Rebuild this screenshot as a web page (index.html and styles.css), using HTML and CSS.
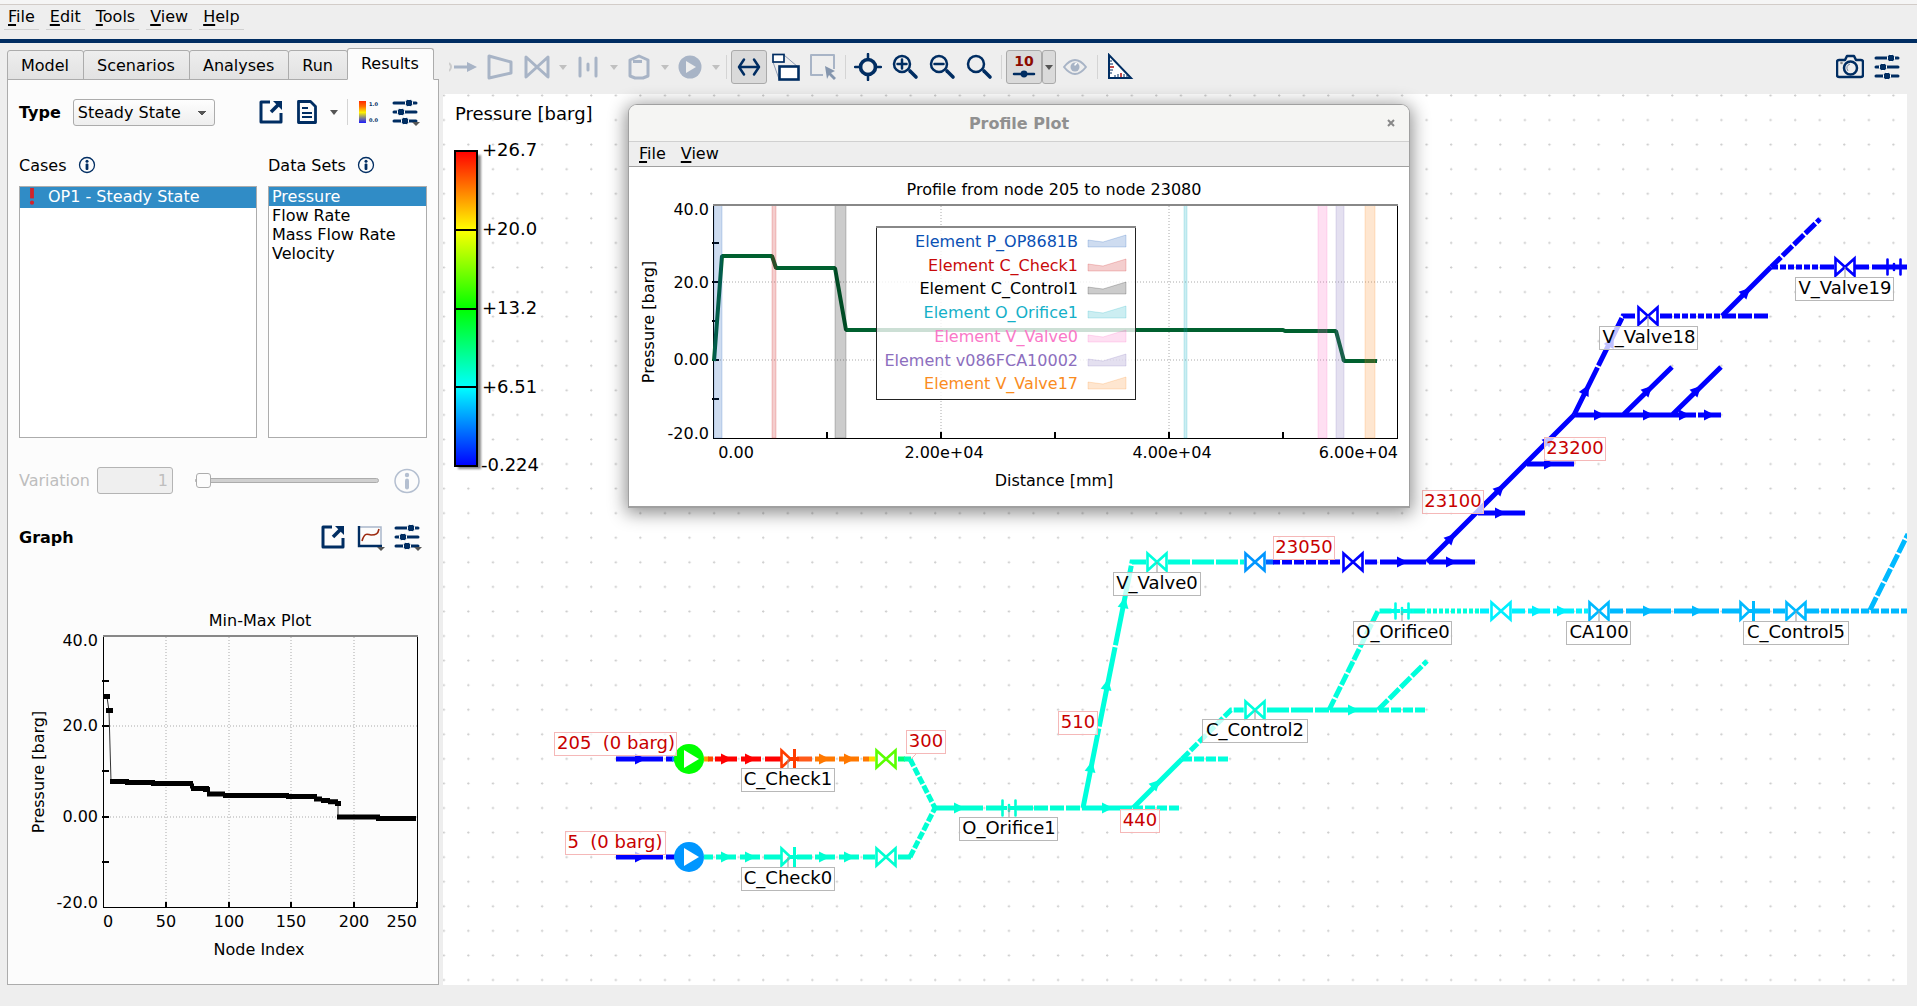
FILE: index.html
```html
<!DOCTYPE html>
<html lang="en">
<head>
<meta charset="utf-8">
<title>Pipe network results</title>
<link rel="stylesheet" href="styles.css">
</head>
<body>
<svg class="defs" aria-hidden="true">
  <defs>
    <symbol id="i-export" viewBox="0 0 28 28"><path d="M13 4H4v20h20v-9" fill="none" stroke="#002d62" stroke-width="3" stroke-linejoin="round"/><path d="M14 14 22 6" stroke="#002d62" stroke-width="3.500"/><path d="M16 3h9v9z" fill="#002d62"/></symbol>
    <symbol id="i-sliders" viewBox="0 0 28 28"><path d="M3 5h22M3 14h22M3 23h22" stroke="#002d62" stroke-width="3" stroke-linecap="round"/><g fill="#002d62" stroke="#fcfcfc"><rect x="14.500" y="1.500" width="7" height="7" rx="2"/><rect x="6.500" y="10.500" width="7" height="7" rx="2"/><rect x="10.500" y="19.500" width="7" height="7" rx="2"/></g></symbol>
    <symbol id="i-info" viewBox="0 0 18 18"><circle cx="9" cy="9" r="7.500" fill="none" stroke="currentColor" stroke-width="1.300"/><circle cx="9" cy="5.200" r="1.500" fill="currentColor"/><rect x="7.600" y="7.600" width="2.800" height="6.400" rx="1" fill="currentColor"/></symbol>
  </defs>
</svg>

<header class="menubar">
  <nav class="menus" aria-label="Main menu">
    <button class="menu"><u>F</u>ile</button>
    <button class="menu"><u>E</u>dit</button>
    <button class="menu"><u>T</u>ools</button>
    <button class="menu"><u>V</u>iew</button>
    <button class="menu"><u>H</u>elp</button>
  </nav>
</header>

<div class="workspace">
  <aside class="sidebar">
    <div class="tabs" role="tablist">
      <button class="tab" role="tab">Model</button>
      <button class="tab" role="tab">Scenarios</button>
      <button class="tab" role="tab">Analyses</button>
      <button class="tab" role="tab">Run</button>
      <button class="tab active" role="tab" aria-selected="true">Results</button>
    </div>
    <section class="pane">
      <div class="row type-row">
        <label class="strong" for="type">Type</label>
        <select id="type" class="combo"><option>Steady State</option></select>
        <div class="tools">
          <button class="tool" aria-label="Open in window"><svg><use href="#i-export"/></svg></button>
          <button class="tool" aria-label="Report"><svg viewBox="0 0 28 28"><path d="M5.500 3.500h12l5 5v16h-17z" fill="none" stroke="#002d62" stroke-width="2.800" stroke-linejoin="round"/><path d="M9 10h6M9 15h10M9 19h10" stroke="#002d62" stroke-width="1.800"/></svg></button>
          <button class="caret" aria-label="Report options"></button>
          <span class="rule"></span>
          <button class="tool" aria-label="Colour scale"><svg viewBox="0 0 28 28"><defs><linearGradient id="mini" x2="0" y2="1"><stop offset="0" stop-color="#ff2a00"/><stop offset=".25" stop-color="#ff7000"/><stop offset=".52" stop-color="#fff200"/><stop offset=".75" stop-color="#8a8a80"/><stop offset="1" stop-color="#1a1aff"/></linearGradient></defs><rect x="4" y="3" width="7" height="22" fill="url(#mini)"/><text x="14" y="8" class="tiny">1.0</text><text x="14" y="24" class="tiny">0.0</text></svg></button>
          <button class="tool" aria-label="Result options"><svg><use href="#i-sliders"/></svg><i class="corner"></i></button>
        </div>
      </div>

      <div class="lists">
        <div class="list-head" id="cases">Cases <svg class="info"><use href="#i-info"/></svg></div>
        <div class="list-head" id="sets">Data Sets <svg class="info"><use href="#i-info"/></svg></div>
        <ul class="list" role="listbox" aria-labelledby="cases">
          <li class="case selected" role="option" aria-selected="true"><svg class="alert" viewBox="0 0 6 20"><path d="M3 1v11" stroke="#d2232a" stroke-width="4"/><circle cx="3" cy="16.500" r="2.200" fill="#d2232a"/></svg>OP1 - Steady State</li>
        </ul>
        <ul class="list" role="listbox" aria-labelledby="sets">
          <li class="selected" role="option" aria-selected="true">Pressure</li>
          <li role="option">Flow Rate</li>
          <li role="option">Mass Flow Rate</li>
          <li role="option">Velocity</li>
        </ul>
      </div>

      <div class="row variation">
        <label for="variation">Variation</label>
        <input id="variation" class="number" type="text" value="1" disabled>
        <input class="slider" type="range" min="1" max="10" value="1" aria-label="Variation" disabled>
        <svg class="info big" viewBox="0 0 26 24"><ellipse cx="13" cy="12" rx="12" ry="11.500" fill="none" stroke="currentColor" stroke-width="1.500"/><circle cx="13" cy="6" r="2.200" fill="currentColor"/><rect x="11" y="9.500" width="4" height="11" rx="2" fill="currentColor"/></svg>
      </div>

      <div class="row graph-row">
        <h2 class="strong">Graph</h2>
        <div class="tools">
          <button class="tool" aria-label="Open graph"><svg><use href="#i-export"/></svg></button>
          <button class="tool" aria-label="Graph kind"><svg viewBox="0 0 28 28"><path d="M3 4h22v18" fill="none" stroke="#a9b6ca" stroke-width="1.500"/><path d="M3 3v20h23" fill="none" stroke="#002d62" stroke-width="2.400"/><path d="M6 18C9 8 12 12 15 12c5 0 7-1 8-6" fill="none" stroke="#9c2a10" stroke-width="1.600"/></svg><i class="corner"></i></button>
          <button class="tool" aria-label="Graph options"><svg><use href="#i-sliders"/></svg><i class="corner"></i></button>
        </div>
      </div>

      <svg class="minmax" viewBox="0 0 408 384" role="img" aria-label="Min-Max Plot">
        <g transform="translate(-19 -592)">
          <g class="gridline"><path d="M166 637V907M229 637V907M291 637V907M354 637V907M104 726H417M104 817H417"/></g>
          <path d="M103.500 636V907H417V636" class="frame"/><path d="M103 636H418" class="frame-top"/>
          <path d="M102 681h7M102 726h7M102 771h7M102 817h7M102 862h7M166 902v5M229 902v5M291 902v5M354 902v5M417 902v5" class="ticks"/>
          <path d="M107 697 109 711 111 781M338 803V816" fill="none" stroke="#333"/>
          <path d="M103 696.500h7M106 710.500h7M110 781.500h19M125 782.500h30M151 783.500h42M190 786h4M191 788.500h18M203 789.500h7M207 794h18M223 795.500h66M286 796.500h31M314 799h8M321 800.500h9M328 801.800h10M335 803.500h6M337 817h43M376 818.500h40" fill="none" stroke="#000" stroke-width="5"/>
          <g class="plot-text">
            <text x="260" y="626" class="mid">Min-Max Plot</text>
            <g class="end"><text x="98" y="646">40.0</text><text x="98" y="731">20.0</text><text x="98" y="822">0.00</text><text x="98" y="908">-20.0</text><text x="417" y="927">250</text></g>
            <g class="mid"><text x="108" y="927">0</text><text x="166" y="927">50</text><text x="229" y="927">100</text><text x="291" y="927">150</text><text x="354" y="927">200</text><text x="259" y="955">Node Index</text><text transform="translate(44 772) rotate(-90)">Pressure [barg]</text></g>
          </g>
        </g>
      </svg>
    </section>
  </aside>

  <main class="main">
    <div class="toolbar" role="toolbar">
      <button class="tbtn faded" aria-label="Pipe"><svg viewBox="0 0 28 28"><path d="M0 10q4 4 0 8" fill="none" stroke="#ccc" stroke-width="2"/><path d="M5 14h15" stroke="#a8b4c6" stroke-width="3"/><path d="m18 9 10 5-10 5z" fill="#a8b4c6"/></svg></button>
      <button class="tbtn faded" aria-label="Reducer"><svg viewBox="0 0 28 28"><path d="M3 3 25 9v11L3 25z" class="line"/></svg></button>
      <button class="tbtn faded" aria-label="Valve"><svg viewBox="0 0 28 28"><path d="M3 4 25 24V4L3 24z" class="line"/></svg></button>
      <button class="caret faded" aria-label="More valves"></button>
      <button class="tbtn faded" aria-label="Orifice"><svg viewBox="0 0 28 28"><path d="M6 5v18M22 5v18M14 11v6" class="line" stroke-linecap="round"/></svg></button>
      <button class="caret faded" aria-label="More fittings"></button>
      <button class="tbtn faded" aria-label="Tank"><svg viewBox="0 0 28 28"><path d="M5 7 14 3l9 4v16l-5 2h-8l-5-2zM8 8.500h9" class="line" stroke-width="2.600"/></svg></button>
      <button class="caret faded" aria-label="More tanks"></button>
      <button class="tbtn faded" aria-label="Pump"><svg viewBox="0 0 28 28"><circle cx="14" cy="14" r="11.500" fill="#a8b4c6"/><path d="m10 8 10 6-10 6z" fill="#eee"/></svg></button>
      <button class="caret faded" aria-label="More pumps"></button>
      <span class="rule"></span>
      <button class="tbtn pressed" aria-label="Stretch"><svg viewBox="0 0 28 28"><path d="M5 14h18M9 6.500 4 14l5 7.500M19 6.500 24 14l-5 7.500" class="navy" stroke-width="3"/></svg></button>
      <button class="tbtn" aria-label="Overview"><svg viewBox="0 0 28 28"><path d="M1 9 7 26M12 2l14 12" stroke="#8d9bb3" fill="none"/><rect x="1" y="1.500" width="11" height="7.500" fill="#fff" stroke="#002d62" stroke-width="1.700"/><rect x="7.500" y="13.500" width="19" height="13" fill="#fff" stroke="#002d62" stroke-width="2.600"/></svg></button>
      <button class="tbtn faded" aria-label="Select"><svg viewBox="0 0 28 28"><path d="M14 22H2V2h23v14" class="line thin"/><path d="m16 13 10 5-4 2 5 5-2 2-5-5-2 4z" fill="#8596ae"/></svg></button>
      <span class="rule"></span>
      <button class="tbtn" aria-label="Centre"><svg viewBox="0 0 28 28"><circle cx="14" cy="14" r="7.500" class="navy heavy"/><path d="M14 1v6M14 21v6M1 14h6M21 14h6" class="navy"/></svg></button>
      <button class="tbtn" aria-label="Zoom in"><svg viewBox="0 0 28 28"><circle cx="11" cy="11" r="8" class="navy"/><path d="M6.500 11h9M11 6.500v9" class="navy"/><path d="m19 18 6 6" class="navy heavy"/></svg></button>
      <button class="tbtn" aria-label="Zoom out"><svg viewBox="0 0 28 28"><circle cx="11" cy="11" r="8" class="navy"/><path d="M6.500 11h9" class="navy"/><path d="m19 18 6 6" class="navy heavy"/></svg></button>
      <button class="tbtn" aria-label="Zoom window"><svg viewBox="0 0 28 28"><circle cx="11" cy="11" r="8" class="navy"/><path d="m19 18 6 6" class="navy heavy"/></svg></button>
      <span class="rule"></span>
      <div class="split">
        <button class="tbtn pressed" aria-label="Value labels"><svg viewBox="0 0 28 28"><text x="14" y="13" class="ten">10</text><path d="M4 21h20" class="navy"/><circle cx="14" cy="21" r="3.400" fill="#002d62"/></svg></button>
        <button class="caret pressed" aria-label="Label options"></button>
      </div>
      <button class="tbtn faded" aria-label="Visibility"><svg viewBox="0 0 28 28"><path d="M3 14q11-14 22 0-11 14-22 0z" class="line thin"/><circle cx="14" cy="14" r="4.500" fill="#a8b4c6"/><path d="M14 12.500a2 2 0 0 1 2-2" stroke="#fff" fill="none" stroke-width="1.500"/></svg></button>
      <span class="rule"></span>
      <button class="tbtn" aria-label="Measure"><svg viewBox="0 0 28 28"><path d="M3 2v23h22z" fill="#fff" stroke="#002d62" stroke-width="2"/><path d="M4 8h2M4 11h3M4 17h3M4 20h2M9 24v-2M12 24v-3M18 24v-3M21 24v-2" stroke="#002d62"/><path d="M4 14h4M15 24v-4" stroke="#b01010" stroke-width="1.500"/></svg></button>
      <div class="right-tools">
        <button class="tbtn" aria-label="Snapshot"><svg viewBox="0 0 28 28"><path d="M3 7h6l2-4h7l2 4h5q2 0 2 2v13q0 2-2 2H3q-2 0-2-2V9q0-2 2-2z" class="navy"/><circle cx="14.500" cy="15" r="6.500" class="navy"/><path d="M12 18q-3-5 2-7" fill="none" stroke="#7687a3"/><circle cx="5.500" cy="10" r="1.300" fill="#8a8a8a"/></svg></button>
        <button class="tbtn" aria-label="Settings"><svg><use href="#i-sliders"/></svg></button>
      </div>
    </div>

    <div class="canvas">
      <svg class="network" role="img" aria-label="Pipe network coloured by pressure">
        <defs>
          <pattern id="dots" width="24.570" height="24.570" patternUnits="userSpaceOnUse" x="-.4" y="0"><path d="M0 1.500h2.400M1.200.300v2.400" stroke="#ccc"/></pattern>
          <linearGradient id="scale" x2="0" y2="1"><stop offset="0" stop-color="red"/><stop offset=".25" stop-color="#ff0"/><stop offset=".5" stop-color="#0f0"/><stop offset=".75" stop-color="#0ff"/><stop offset="1" stop-color="#00f"/></linearGradient>
          <path id="arrow" d="M-5-5.500 6 0-5 5.500z" fill="currentColor"/>
          <path id="v" d="M-9.500-8.500 9.500 8.500V-8.500L-9.500 8.500Z" fill="#fff" stroke="currentColor" stroke-width="2.600"/>
          <g id="orifice" stroke="currentColor" fill="none"><path d="M-6.500-7.500v15M6.500-7.500v15M0-3v6" stroke-width="2.600" stroke-linecap="round"/><path d="M-12 0h24" stroke-width="4" stroke-dasharray="10 1"/></g>
          <g id="check" stroke="currentColor" fill="#fff"><path d="M2 0h9" stroke-width="4"/><path d="M-6.500-8.500 2.500 0l-9 8.500z" stroke-width="2.600"/><path d="M6.500-10v20" stroke-width="3"/></g>
        </defs>
        <rect width="100%" height="100%" fill="url(#dots)"/>
        <g transform="translate(-443 -94)">
          <!-- inlets and the two pump lines -->
          <g class="pipe c-blue"><path d="M616 759h47M616 857h47"/><path d="M666 857h12" /><path d="M666 759h7"/><path d="M672 759h6" color="#0080ff"/><use href="#arrow" x="640" y="759"/><use href="#arrow" x="640" y="857"/></g>
          <g class="pipe c-red"><path d="M704 759h5" color="#ffa000"/><path d="M708 759h5" color="#ff4800"/><path d="M715 759h22M741 759h20M765 759h16"/><use href="#arrow" x="726" y="759"/><use href="#arrow" x="750" y="759"/></g>
          <g class="pipe c-orange"><path d="M797 759h15" color="#ff5a1a"/><path d="M815 759h20M839 759h20"/><path d="M863 759h6"/><path d="M869 759h6" color="#ffd800"/><use href="#arrow" x="824" y="759"/><use href="#arrow" x="849" y="759"/></g>
          <g class="pipe"><path d="M898 759h7" color="#00ff78"/><path d="M904 759h7" color="#00ffb4"/></g>
          <g class="pipe c-teal">
            <path d="M704 857h9M716 857h20M740 857h20M764 857h17M797 857h15M815 857h20M839 857h20M863 857h12M898 857h13"/>
            <path d="M910 759 935 808M910 857 935 808" class="d9"/>
            <path d="M935 808h48M986 808h16M1017 808h16"/><path d="M1034 808h49" class="d16"/>
            <use href="#arrow" x="726" y="857"/><use href="#arrow" x="750" y="857"/><use href="#arrow" x="824" y="857"/><use href="#arrow" x="849" y="857"/><use href="#arrow" x="959" y="808"/>
          </g>
          <!-- branch 510 up to V_Valve0 and branch 440 -->
          <g class="pipe c-aqua">
            <path d="M1083 808h49"/><path d="M1133 808h47M1182 759h47" class="d12"/>
            <path d="M1083 808 1132 562h14" class="d82"/><path d="M1168 562h76" class="d24"/>
            <path d="M1133 808 1182 759"/><path d="M1182 759 1231 710h13" class="d12"/>
            <path d="M1267 710h62" class="d24"/><path d="M1330 710h47"/><path d="M1379 710h47" class="d12"/>
            <path d="M1378 710 1427 661" class="d16"/><path d="M1329 710 1378 611h17" class="d14"/><path d="M1409 611h16"/><path d="M1427 611h52" class="d5"/>
            <use href="#arrow" x="1107" y="808"/><use href="#arrow" x="1353" y="710"/>
            <use href="#arrow" transform="translate(1156 784) rotate(-45)"/>
            <use href="#arrow" transform="translate(1091 767) rotate(-79)"/><use href="#arrow" transform="translate(1107 685) rotate(-79)"/><use href="#arrow" transform="translate(1124 603) rotate(-79)"/>
          </g>
          <!-- header 23050 and its laterals -->
          <g class="pipe c-blue">
            <path d="M1266 562h8" color="#0064ff"/><path d="M1273 562h7"/><path d="M1282 562h60" class="d12"/><path d="M1365 562h12M1380 562h46M1429 562h46M1478 513h47M1527 464h47"/>
            <path d="M1427 562 1574 415M1574 415h147M1623 415 1672 367M1672 415 1721 367" /><path d="M1574 415 1623 316h12" class="d55"/>
            <path d="M1660 316h12"/><path d="M1674 316h46" class="d8"/><path d="M1722 316h48" class="d16"/>
            <path d="M1722 316 1771 267"/><path d="M1771 267 1820 219" class="d16"/><path d="M1772 267h46" class="d8"/><path d="M1820 267h14M1855 267h14M1872 267h35"/>
            <use href="#arrow" x="1402" y="562"/><use href="#arrow" x="1451" y="562"/><use href="#arrow" x="1500" y="513"/><use href="#arrow" x="1549" y="464"/>
            <use href="#arrow" x="1599" y="415"/><use href="#arrow" x="1648" y="415"/><use href="#arrow" x="1684" y="415"/><use href="#arrow" x="1709" y="415"/>
            <use href="#arrow" transform="translate(1451 538) rotate(-45)"/><use href="#arrow" transform="translate(1500 489) rotate(-45)"/><use href="#arrow" transform="translate(1549 440) rotate(-45)"/>
            <use href="#arrow" transform="translate(1648 390) rotate(-45)"/><use href="#arrow" transform="translate(1697 390) rotate(-45)"/><use href="#arrow" transform="translate(1746 292) rotate(-45)"/>
            <use href="#arrow" transform="translate(1586 390) rotate(-63)"/><use href="#arrow" transform="translate(1611 342) rotate(-63)"/>
          </g>
          <path d="M1697 412v6" stroke="#fff" stroke-width="2"/>
          <!-- CA100 line -->
          <g class="pipe c-cyan"><path d="M1480 611h9M1512 611h13M1528 611h22M1553 611h21"/><path d="M1576 611h12" class="d8"/><use href="#arrow" x="1537" y="611"/><use href="#arrow" x="1562" y="611"/></g>
          <g class="pipe c-sky"><path d="M1610 611h13M1626 611h45M1674 611h45M1722 611h18M1755 611h15M1773 611h12M1806 611h13"/><path d="M1821 611h86" class="d9"/><path d="M1870 610 1908 534" class="d16"/><use href="#arrow" x="1648" y="611"/><use href="#arrow" x="1697" y="611"/></g>
          <!-- components -->
          <circle cx="689" cy="759" r="15" fill="#0f0"/><path d="M684 750v18l15-9z" fill="#fff"/>
          <circle cx="689" cy="857" r="15" fill="#0096ff"/><path d="M684 848v18l15-9z" fill="#fff"/>
          <use href="#check" x="788" y="759" color="#ff3c00"/><use href="#v" x="886" y="759" color="#5aff00"/>
          <g class="c-teal"><use href="#check" x="788" y="857"/><use href="#v" x="886" y="857"/><use href="#orifice" x="1009" y="808"/></g>
          <g class="c-aqua"><use href="#v" x="1157" y="562"/><use href="#v" x="1255" y="710"/><use href="#orifice" x="1402" y="611" color="#00ffe8"/></g>
          <use href="#v" x="1255" y="562" color="#0096ff"/><use href="#v" x="1501" y="611" color="#00f0ff"/>
          <g class="c-sky"><use href="#v" x="1599" y="611"/><use href="#check" x="1747" y="611"/><use href="#v" x="1796" y="611"/></g>
          <g class="c-blue"><use href="#v" x="1353" y="562"/><use href="#v" x="1648" y="316"/><use href="#v" x="1845" y="267"/><use href="#orifice" x="1894" y="267"/></g>
          <path d="M788 759v9M788 857v10M1009 808v9M1157 562v10M1402 611v10M1255 710v9M1648 316v10M1845 267v10M1599 611v10M1796 611v10" stroke="#999" fill="none"/>
          <path d="m911 759 6-6M1575 464v-4" stroke="#f5b8b8" fill="none"/>
          <!-- component tags -->
          <g class="tag">
            <rect x="741.500" y="768.500" width="93" height="23"/><text x="788" y="785">C_Check1</text>
            <rect x="741.500" y="867.500" width="93" height="23"/><text x="788" y="884">C_Check0</text>
            <rect x="959.500" y="817.500" width="98" height="23"/><text x="1009" y="834">O_Orifice1</text>
            <rect x="1113.500" y="572.500" width="87" height="23"/><text x="1157" y="589">V_Valve0</text>
            <rect x="1353.500" y="621.500" width="98" height="23"/><text x="1403" y="638">O_Orifice0</text>
            <rect x="1202.500" y="719.500" width="105" height="23"/><text x="1255" y="736">C_Control2</text>
            <rect x="1599.500" y="326.500" width="98" height="23"/><text x="1649" y="343">V_Valve18</text>
            <rect x="1795.500" y="277.500" width="98" height="23"/><text x="1845" y="294">V_Valve19</text>
            <rect x="1566.500" y="621.500" width="64" height="23"/><text x="1599" y="638">CA100</text>
            <rect x="1743.500" y="621.500" width="105" height="23"/><text x="1796" y="638">C_Control5</text>
          </g>
          <!-- node tags -->
          <g class="tag node">
            <rect x="554.500" y="732.500" width="122" height="23"/><text x="616" y="749">205&#160; (0 barg)</text>
            <rect x="565.500" y="831.500" width="100" height="23"/><text x="615" y="848">5&#160; (0 barg)</text>
            <rect x="906.500" y="730.500" width="39" height="23"/><text x="926" y="747">300</text>
            <rect x="1058.500" y="711.500" width="39" height="23"/><text x="1078" y="728">510</text>
            <rect x="1120.500" y="809.500" width="39" height="23"/><text x="1140" y="826">440</text>
            <rect x="1273.500" y="536.500" width="61" height="23"/><text x="1304" y="553">23050</text>
            <rect x="1422.500" y="490.500" width="61" height="23"/><text x="1453" y="507">23100</text>
            <rect x="1544.500" y="437.500" width="61" height="23"/><text x="1575" y="454">23200</text>
          </g>
          <!-- colour scale -->
          <rect x="458" y="155" width="23" height="314" fill="#888" class="soft"/>
          <rect x="455" y="151" width="22" height="315" fill="url(#scale)" stroke="#000" stroke-width="2"/>
          <path d="M455 230h22M455 309h22M455 387h22" stroke="#000" stroke-width="2"/>
          <g class="scale-text"><text x="455" y="120">Pressure [barg]</text><text x="482" y="156">+26.7</text><text x="482" y="235">+20.0</text><text x="482" y="314">+13.2</text><text x="482" y="393">+6.51</text><text x="481" y="471">-0.224</text></g>
        </g>
      </svg>

      <section class="window" role="dialog" aria-labelledby="win-title">
        <header class="titlebar"><h1 id="win-title">Profile Plot</h1><button class="close" aria-label="Close"><svg viewBox="0 0 8 8"><path d="m1 1 6 6M7 1 1 7" stroke="#888" stroke-width="2"/></svg></button></header>
        <nav class="win-menus" aria-label="Plot menu"><button class="menu"><u>F</u>ile</button><button class="menu"><u>V</u>iew</button></nav>
        <svg class="profile" viewBox="0 0 780 339" role="img" aria-label="Profile from node 205 to node 23080">
          <g transform="translate(-629 -167)">
            <g class="gridline"><path d="M941 206V438M1169 206V438M714 282H1397M714 360H1397"/></g>
            <path d="M713.500 205V438.500H1397.500V205" class="frame"/>
            <path d="M712 243h7M712 282h7M712 321h7M712 360h7M712 399h7M827 432v6M941 432v6M1055 432v6M1169 432v6M1283 432v6" class="ticks"/>
            <path d="M714 361 722 256H772L776 268H835L846 330H1283L1285 331H1336L1344 361H1377" fill="none" stroke="#00602f" stroke-width="4" stroke-linejoin="bevel"/>
            <g class="band">
              <rect x="714" y="205" width="8" height="233" fill="#0a50b4" stroke="#0a50b4"/><rect x="772" y="205" width="4" height="233" fill="#c80a0a" stroke="#c80a0a"/><rect x="835" y="205" width="11" height="233" fill="#000" stroke="#000"/><rect x="1184" y="205" width="3" height="233" fill="#00aabe" stroke="#00aabe"/><rect x="1318" y="205" width="9" height="233" fill="#fa5fbe" stroke="#fa5fbe"/><rect x="1336" y="205" width="8" height="233" fill="#7864b4" stroke="#7864b4"/><rect x="1365" y="205" width="10" height="233" fill="#fa8214" stroke="#fa8214"/>
            </g>
            <path d="M713 205H1398" class="frame-top"/>
            <rect x="876.500" y="226.500" width="259" height="173" fill="#fff" fill-opacity=".8" stroke="#222"/><path d="M876 226.500h260" class="frame-top"/>
            <g class="plot-text end">
              <text x="1078" y="247" fill="#0a50b4">Element P_OP8681B</text><text x="1078" y="271" fill="#c80a0a">Element C_Check1</text><text x="1078" y="294">Element C_Control1</text><text x="1078" y="318" fill="#14b0c8">Element O_Orifice1</text><text x="1078" y="342" fill="#fa78c8">Element V_Valve0</text><text x="1078" y="366" fill="#8c6ebe">Element v086FCA10002</text><text x="1078" y="389" fill="#fa8c1e">Element V_Valve17</text>
              <text x="709" y="215">40.0</text><text x="709" y="288">20.0</text><text x="709" y="365">0.00</text><text x="709" y="439">-20.0</text><text x="1398" y="458">6.00e+04</text>
            </g>
            <g class="swatch">
              <path d="m1088 240 15 2 23-7v12h-38z" fill="#0a50b4" stroke="#0a50b4"/><path d="m1088 264 15 2 23-7v12h-38z" fill="#c80a0a" stroke="#c80a0a"/><path d="m1088 287 15 2 23-7v12h-38z" stroke="#000"/><path d="m1088 311 15 2 23-7v12h-38z" fill="#00aabe" stroke="#00aabe"/><path d="m1088 335 15 2 23-7v12h-38z" fill="#fa5fbe" stroke="#fa5fbe"/><path d="m1088 359 15 2 23-7v12h-38z" fill="#7864b4" stroke="#7864b4"/><path d="m1088 382 15 2 23-7v12h-38z" fill="#fa8214" stroke="#fa8214"/>
            </g>
            <g class="plot-text mid"><text x="1054" y="195">Profile from node 205 to node 23080</text><text x="736" y="458">0.00</text><text x="944" y="458">2.00e+04</text><text x="1172" y="458">4.00e+04</text><text x="1054" y="486">Distance [mm]</text><text transform="translate(654 322) rotate(-90)">Pressure [barg]</text></g>
          </g>
        </svg>
      </section>
    </div>
  </main>
</div>
</body>
</html>
```

FILE: styles.css
```css
* { box-sizing: border-box; }
body {
  margin: 0;
  min-height: 100vh;
  display: flex;
  flex-direction: column;
  background: #eee;
  color: #000;
  font: 16px/19px "DejaVu Sans", sans-serif;
}
button { font: inherit; color: inherit; background: none; border: 0; padding: 0; margin: 0; }
h1, h2 { margin: 0; font-size: 16px; font-weight: bold; }
ul { margin: 0; padding: 0; list-style: none; }
.defs { position: absolute; width: 0; height: 0; }

/* menu bar */
.menubar { height: 43px; padding-top: 3px; border-top: 4px solid #f5f5f5; border-bottom: 4px solid #002d62; box-shadow: inset 0 1px #d2ccc8; }
.menus { display: flex; gap: 7px; padding-left: 4px; }
.menus .menu { padding: 0 4px 3px; border-bottom: 1px solid #d0d0d0; }
.menu u { text-decoration-thickness: 2px; text-underline-offset: 2px; }

.workspace { flex: 1; display: flex; min-height: 0; }

/* sidebar */
.sidebar { flex: none; width: 432px; margin-left: 7px; padding: 5px 0 21px; display: flex; flex-direction: column; }
.tabs { display: flex; align-items: flex-end; height: 32px; margin-bottom: -1px; z-index: 1; }
.tab { height: 30px; padding: 0 14px 0 13px; margin-right: -1px; border: 1px solid #acacac; border-radius: 3px 3px 0 0; background: linear-gradient(#eee, #e2e2e2); }
.tab.active { height: 32px; background: #fcfcfc; border-bottom-color: #fcfcfc; padding-bottom: 2px; }
.pane { flex: 1; border: 1px solid #acacac; background: #fcfcfc; padding: 18px 11px 0; }
.row { display: flex; align-items: center; }
.strong { font-weight: bold; }
.type-row { height: 28px; }
.combo {
  appearance: none; width: 142px; height: 27px; margin-left: 12px; padding: 0 4px; font: inherit; color: inherit;
  border: 1px solid #acacac; border-radius: 3px;
  background-image: linear-gradient(to bottom left, #555 50%, transparent 51%), linear-gradient(to bottom right, #555 50%, transparent 51%), linear-gradient(#fefefe, #eee);
  background-size: 4px 5px, 4px 5px, auto;
  background-repeat: no-repeat;
  background-position: 124px 11px, 128px 11px, 0 0;
}
.tools { display: flex; align-items: center; margin-left: auto; gap: 9px; padding-right: 6px; }
.tool { position: relative; width: 28px; height: 28px; }
.tool svg { display: block; width: 28px; height: 28px; }
.corner { position: absolute; right: -1px; bottom: 0; border: 4px solid transparent; border-top-color: #555; border-bottom: 0; }
.caret { width: 13px; height: 34px; display: grid; place-items: center; }
.caret::before { content: ""; border: 4px solid transparent; border-top: 5px solid #555; border-bottom: 0; }
.rule { width: 7px; height: 26px; background: linear-gradient(#d4d4d4, #d4d4d4) center / 1px 100% no-repeat; }
.type-row .tools { gap: 8px; padding-right: 8px; }
.type-row .caret { margin-left: -2px; }
.type-row .rule { margin: 0 -4px; }
.tiny { font: bold 5px "DejaVu Sans", sans-serif; fill: #002d62; }

.lists { display: grid; grid-template-columns: 238px 159px; column-gap: 11px; margin-top: 28px; }
.list-head { display: flex; align-items: center; gap: 11px; height: 22px; margin-bottom: 10px; }
.info { width: 18px; height: 18px; color: #002d62; flex: none; }
.list { height: 252px; border: 1px solid #acacac; background: #fff; }
.list li { padding-left: 3px; }
.list .case { display: flex; align-items: center; height: 21px; gap: 13px; padding: 0 0 2px 9px; }
.list .selected { background: #308cc6; color: #fff; }
.alert { width: 6px; height: 19px; }

.variation { margin-top: 29px; height: 27px; color: #bebebe; }
.number { width: 76px; height: 27px; margin-left: 7px; padding: 0 4px; font: inherit; color: #bebebe; text-align: right; border: 1px solid #b4b4b4; border-radius: 3px; background: #efefef; }
.slider { appearance: none; width: 184px; height: 16px; margin: 0 0 0 22px; background: none; }
.slider::-webkit-slider-runnable-track { height: 5px; border: 1px solid #acacac; border-radius: 3px; background: #d0d0d0; }
.slider::-webkit-slider-thumb { appearance: none; width: 15px; height: 15px; margin-top: -6px; border: 1px solid #acacac; border-radius: 3px; background: #fcfcfc; }
.info.big { width: 26px; height: 26px; margin-left: auto; margin-right: 7px; color: #b4bfd0; }

.graph-row { margin-top: 29px; height: 28px; }
.minmax { display: block; width: 100%; max-width: 408px; margin-top: 41px; }

.gridline path { fill: none; stroke: #aaa; stroke-dasharray: 1 2; }
.frame { fill: none; stroke: #000; stroke-width: 1; shape-rendering: crispEdges; }
.frame-top { stroke: #888; stroke-width: 2; fill: none; shape-rendering: crispEdges; }
.ticks { stroke: #000; stroke-width: 2; fill: none; shape-rendering: crispEdges; }
.plot-text { font-size: 16px; }
.mid { text-anchor: middle; }
.end { text-anchor: end; }

/* toolbar */
.main { flex: 1; min-width: 0; display: flex; flex-direction: column; padding: 0 10px 21px 4px; }
.toolbar { flex: none; height: 51px; display: flex; align-items: flex-start; gap: 1px; padding: 7px 0 0 2px; }
.tbtn { width: 36px; height: 34px; display: grid; place-items: center; border: 1px solid transparent; flex: none; }
.tbtn svg { width: 28px; height: 28px; display: block; }
.toolbar .rule { height: 24px; margin-top: 5px; }
.tbtn.pressed, .caret.pressed { border: 1px solid #aaa; border-radius: 3px; background: #dadada; }
.caret.pressed { width: 14px; }
.caret.faded::before { border-top-color: #c0c0c0; }
.split { display: flex; }
.line { fill: none; stroke: #a8b4c6; stroke-width: 3; stroke-linejoin: round; }
.line.thin { stroke-width: 2; }
.navy { fill: none; stroke: #002d62; stroke-width: 2.500; stroke-linecap: round; stroke-linejoin: round; }
.navy.heavy { stroke-width: 3.600; }
.ten { font: bold 14px "DejaVu Sans", sans-serif; fill: #8c0a00; text-anchor: middle; }
.right-tools { display: flex; gap: 1px; margin-left: auto; padding-right: 2px; }

/* diagram */
.canvas { position: relative; flex: 1; background: #fff; min-height: 600px; }
.network { position: absolute; inset: 0; width: 100%; height: 100%; overflow: hidden; }
.pipe { fill: none; stroke-width: 5; }
.pipe path { stroke: currentColor; }
.pipe use { stroke: none; }
.c-blue { color: #00f; }
.c-red { color: #f00; }
.c-orange { color: #ff7800; }
.c-teal { color: #00ffd2; }
.c-aqua { color: #00ffdc; }
.c-cyan { color: #00f0ff; }
.c-sky { color: #00b9ff; }
.d5 { stroke-dasharray: 4 2; }
.d8 { stroke-dasharray: 6 2; }
.d9 { stroke-dasharray: 8 2; }
.d12 { stroke-dasharray: 10 2; }
.d14 { stroke-dasharray: 12 2; }
.d16 { stroke-dasharray: 14 2; }
.d24 { stroke-dasharray: 22 2; }
.d55 { stroke-dasharray: 53 2; }
.d82 { stroke-dasharray: 81 2; }
.tag { font-size: 18px; text-anchor: middle; }
.tag rect { fill: #fff; fill-opacity: .75; stroke: #b8b8b8; }
.tag text { fill: #000; }
.node rect { stroke: #f5b8b8; }
.node text { fill: #c80000; }
.soft { filter: blur(1px); }
.scale-text { font-size: 18px; }

/* plot window */
.window { position: absolute; left: 185px; top: 10px; width: 782px; background: #fff; border: 1px solid #a0a0a0; border-bottom-width: 2px; border-radius: 9px 9px 0 0; box-shadow: 0 3px 18px 2px rgba(0, 0, 0, .45); }
.titlebar { position: relative; display: flex; align-items: center; justify-content: center; height: 37px; background: #f5f5f3; border-bottom: 1px solid #d0d0d0; border-radius: 8px 8px 0 0; color: #909090; }
.close { position: absolute; right: 10px; top: 10px; width: 16px; height: 16px; display: grid; place-items: center; }
.close svg { width: 8px; height: 8px; }
.win-menus { display: flex; align-items: flex-start; gap: 15px; height: 25px; padding: 2px 10px; background: #eee; border-bottom: 1px solid #a0a0a0; }
.profile { display: block; width: 100%; }
.band rect, .swatch path { fill-opacity: .2; stroke-opacity: .2; }
```
